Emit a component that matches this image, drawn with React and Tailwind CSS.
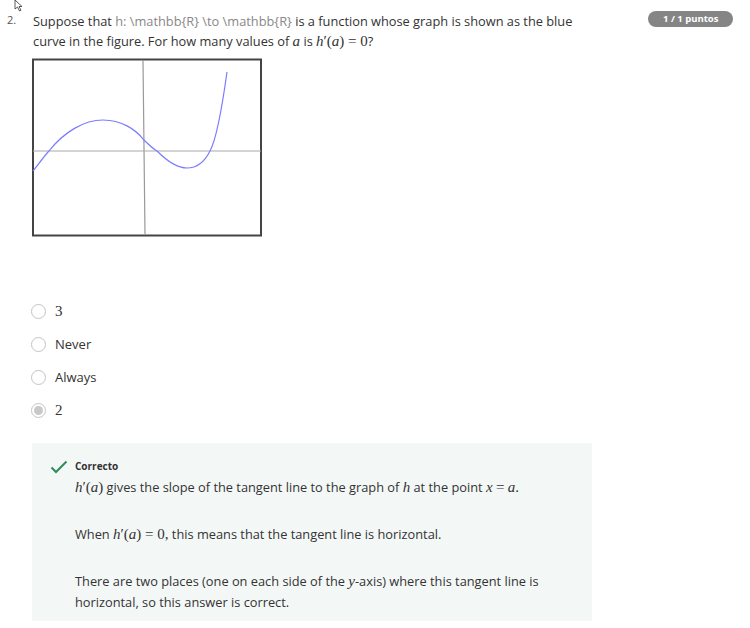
import React from "react";

const M = ({ children }) => (
  <span className="font-['Liberation_Serif',serif] italic text-[15px] leading-none">{children}</span>
);
const R = ({ children }) => (
  <span className="font-['Liberation_Serif',serif] text-[15px] leading-none">{children}</span>
);

function Radio({ checked, children }) {
  return (
    <div className="flex items-center h-[33px]">
      <span className="w-[15px] h-[15px] rounded-full border border-[#c4c4c4] bg-white flex items-center justify-center">
        {checked && <span className="w-[9px] h-[9px] rounded-full bg-[#c8c8c8]" />}
      </span>
      <span className="ml-[9px] text-[13px] text-[#333]">{children}</span>
    </div>
  );
}

function Graph() {
  return (
    <svg width="230" height="179" viewBox="0 0 230 179" className="block">
      <rect x="1" y="1.5" width="228" height="176" fill="white" stroke="#444" strokeWidth="2" />
      <line x1="111" y1="2" x2="113" y2="177" stroke="#999" strokeWidth="1.2" />
      <line x1="1" y1="93" x2="229" y2="93" stroke="#aaa" strokeWidth="1.2" />
      <path
        d="M1 113 C 8 104, 14 96, 17 93 C 32 74, 52 62, 71 62 C 90 62, 104 72, 111 81 C 116 86, 121 91, 125 93 C 135 103, 145 110, 155 110 C 166 110, 173 103, 178 93 C 184 82, 190 50, 195 14"
        fill="none"
        stroke="#7b7bff"
        strokeWidth="1.2"
      />
    </svg>
  );
}

export default function App() {
  return (
    <div className="relative w-[750px] h-[628px] bg-white font-['Open_Sans',sans-serif] text-[#333] overflow-hidden">
      <svg className="absolute left-[14px] top-0" width="12" height="12" viewBox="0 0 12 12">
        <path d="M1 0 L1 9 L3.5 7 L5.5 11 L7 10.2 L5 6.5 L8 6.5 Z" fill="white" stroke="#333" strokeWidth="0.8" />
      </svg>

      <div className="flex pt-[11px]">
        <div className="w-[33px] pl-[7px] text-[11px] text-[#555] pt-[1px]">2.</div>
        <div className="flex-1">
          <div className="flex">
            <p className="w-[560px] text-[12.8px] leading-[20px]">
              Suppose that <span className="text-[#888]">h: \mathbb{"{R}"} \to \mathbb{"{R}"}</span> is a function whose graph is shown as the blue curve in the figure. For how many values of <M>a</M> is <M>h</M><R>′(</R><M>a</M><R>) = 0</R>?
            </p>
            <div className="ml-[55px] h-[16px] px-[15px] rounded-full bg-[#858585] text-white text-[9.5px] font-bold leading-[16px]">
              1 / 1 puntos
            </div>
          </div>
          <div className="mt-[7px] -ml-[1px]">
            <Graph />
          </div>

          <div className="mt-[58px] -ml-[2px]">
            <Radio><R>3</R></Radio>
            <Radio>Never</Radio>
            <Radio>Always</Radio>
            <Radio checked><R>2</R></Radio>
          </div>

          <div className="mt-[16px] -ml-[1px] w-[560px] h-[178px] bg-[#f3f8f7] pl-[18px] pt-[16px]">
            <div className="flex">
              <svg width="18" height="14" viewBox="0 0 18 14" className="mt-[1px]">
                <path d="M1.5 7.5 L6 12 L16.5 1.5" fill="none" stroke="#2e8b57" strokeWidth="2" />
              </svg>
              <div className="ml-[7px]">
                <div className="text-[10px] font-bold leading-[14px]">Correcto</div>
                <p className="text-[12.8px] leading-[20px] mt-[4px]">
                  <M>h</M><R>′(</R><M>a</M><R>)</R> gives the slope of the tangent line to the graph of <M>h</M> at the point <M>x</M> <R>=</R> <M>a</M><R>.</R>
                </p>
                <p className="text-[12.8px] leading-[20px] mt-[27px]">
                  When <M>h</M><R>′(</R><M>a</M><R>) = 0,</R> this means that the tangent line is horizontal.
                </p>
                <p className="text-[12.8px] leading-[21px] mt-[27px] w-[490px]">
                  There are two places (one on each side of the <M>y</M>-axis) where this tangent line is horizontal, so this answer is correct.
                </p>
              </div>
            </div>
          </div>
        </div>
      </div>
    </div>
  );
}
